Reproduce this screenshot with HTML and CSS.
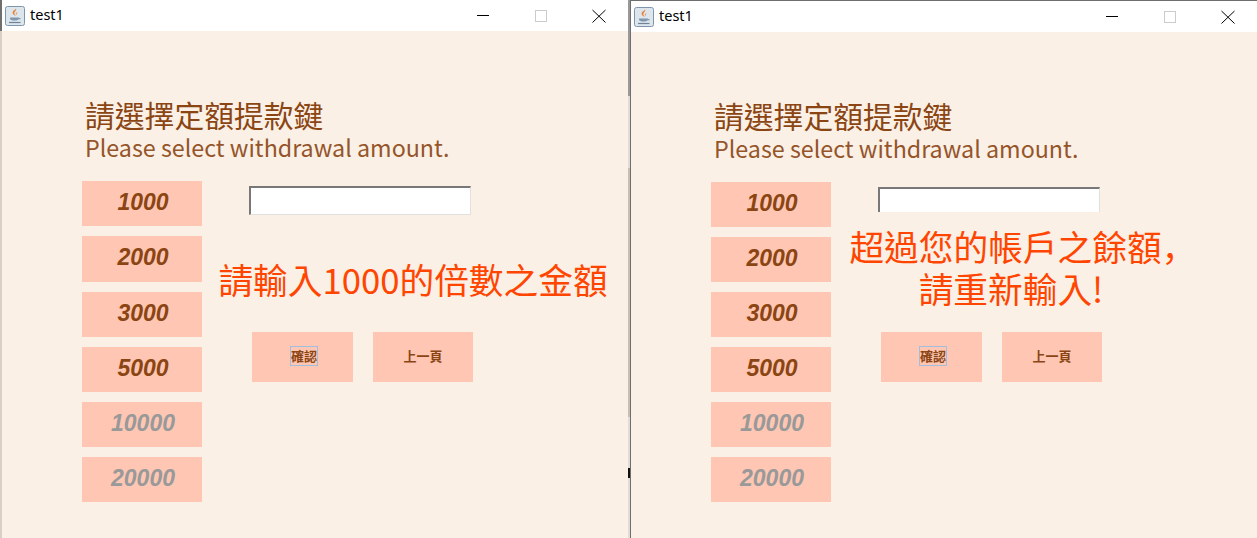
FILE: index.html
```html
<!DOCTYPE html>
<html lang="zh-Hant">
<head>
<meta charset="utf-8">
<title>test1</title>
<link rel="stylesheet" href="styles.css">
</head>
<body>
<main class="desktop">
  <div class="edge"></div>
  <section class="window window-left">
    <header class="titlebar">
      <svg class="app-icon" viewBox="0 0 20 20" aria-hidden="true">
        <rect x="0.5" y="0.5" width="19" height="19" rx="2" fill="#dde5ed" stroke="#7d96ad"/>
        <path d="M11 2.500c1.200 2-2.200 3-1.500 5.500.2.800.8 1.300 1.500 1.800-2.600-.4-4-2.200-3.300-4C8.300 4.300 10.300 4 11 2.500zM12.300 6c.3 1.200-1.300 1.800-.9 3.300-1.100-1.200-.6-2.500.9-3.300z" fill="#e8853a"/>
        <path d="M5 11.500h9v1c0 1.400-2 2-4.500 2S5 13.900 5 12.500zM14 12h1.500v1.300H14z" fill="#8297ab"/>
        <path d="M4 16.500h11.500" stroke="#6f8296" stroke-width="1.200"/>
      </svg>
      <span class="title">test1</span>
      <div class="controls">
        <svg class="ctl" viewBox="0 0 46 30" aria-hidden="true"><path d="M17 14.500h12" stroke="#000"/></svg>
        <svg class="ctl" viewBox="0 0 46 30" aria-hidden="true"><rect x="17.500" y="9.500" width="11" height="11" fill="none" stroke="#ccc"/></svg>
        <svg class="ctl" viewBox="0 0 46 30" aria-hidden="true"><path d="M16.500 9l13 12.500M29.500 9l-13 12.500" stroke="#000" fill="none"/></svg>
      </div>
    </header>
    <div class="content">
      <h1 class="heading">請選擇定額提款鍵</h1>
      <p class="subheading">Please select withdrawal amount.</p>
      <div class="panel">
        <div class="amounts">
          <button class="amount">1000</button>
          <button class="amount">2000</button>
          <button class="amount">3000</button>
          <button class="amount">5000</button>
          <button class="amount off">10000</button>
          <button class="amount off">20000</button>
        </div>
        <div class="form">
          <div class="field tall"></div>
          <p class="message single">請輸入1000的倍數之金額</p>
          <div class="actions">
            <button class="action"><span class="focus">確認</span></button>
            <button class="action">上一頁</button>
          </div>
        </div>
      </div>
    </div>
  </section>
  <div class="gap"><span class="gap-mark"></span></div>
  <section class="window window-right">
    <header class="titlebar">
      <svg class="app-icon" viewBox="0 0 20 20" aria-hidden="true">
        <rect x="0.5" y="0.5" width="19" height="19" rx="2" fill="#dde5ed" stroke="#7d96ad"/>
        <path d="M11 2.500c1.200 2-2.200 3-1.500 5.500.2.800.8 1.300 1.500 1.800-2.600-.4-4-2.200-3.300-4C8.300 4.300 10.300 4 11 2.500zM12.300 6c.3 1.200-1.300 1.800-.9 3.300-1.100-1.200-.6-2.500.9-3.300z" fill="#e8853a"/>
        <path d="M5 11.500h9v1c0 1.400-2 2-4.500 2S5 13.900 5 12.500zM14 12h1.500v1.300H14z" fill="#8297ab"/>
        <path d="M4 16.500h11.500" stroke="#6f8296" stroke-width="1.200"/>
      </svg>
      <span class="title">test1</span>
      <div class="controls">
        <svg class="ctl" viewBox="0 0 46 30" aria-hidden="true"><path d="M17 14.500h12" stroke="#000"/></svg>
        <svg class="ctl" viewBox="0 0 46 30" aria-hidden="true"><rect x="17.500" y="9.500" width="11" height="11" fill="none" stroke="#ccc"/></svg>
        <svg class="ctl" viewBox="0 0 46 30" aria-hidden="true"><path d="M16.500 9l13 12.500M29.500 9l-13 12.500" stroke="#000" fill="none"/></svg>
      </div>
    </header>
    <div class="content">
      <h1 class="heading">請選擇定額提款鍵</h1>
      <p class="subheading">Please select withdrawal amount.</p>
      <div class="panel">
        <div class="amounts">
          <button class="amount">1000</button>
          <button class="amount">2000</button>
          <button class="amount">3000</button>
          <button class="amount">5000</button>
          <button class="amount off">10000</button>
          <button class="amount off">20000</button>
        </div>
        <div class="form">
          <div class="field short"></div>
          <p class="message double">超過您的帳戶之餘額<span class="comma">，</span><br>請重新輸入!</p>
          <div class="actions">
            <button class="action"><span class="focus">確認</span></button>
            <button class="action">上一頁</button>
          </div>
        </div>
      </div>
    </div>
  </section>
</main>
</body>
</html>
```

FILE: styles.css
```css
* { box-sizing: border-box; }
html, body { margin: 0; height: 100%; overflow: hidden; }
body { background: #faf0e6; font-family: "Noto Sans CJK TC", "Noto Sans", sans-serif; }

.desktop { display: flex; height: 538px; overflow: hidden; }
.edge { width: 2px; flex: none; background: linear-gradient(to bottom, #6f6f6f 0 31px, #d8cfc6 31px); }
.window { width: 626px; height: 538px; flex: none; background: #faf0e6; }
.window-right { border-top: 1px solid #6e6e6e; }

.gap { width: 3px; flex: none; position: relative; border-right: 1px solid #6e6e6e; background: linear-gradient(to bottom, #999 0 96px, #e2dcd6 96px 168px, #c9beb3 168px 417px, #e2dcd6 417px); }
.gap-mark { position: absolute; left: 0; top: 468px; width: 2px; height: 10px; background: #111; }

.titlebar { height: 31px; background: #fff; display: flex; align-items: center; padding-left: 3px; }
.app-icon { width: 20px; height: 20px; flex: none; }
.title { font-family: "Noto Sans", sans-serif; font-size: 14.5px; margin-left: 5px; padding-bottom: 3px; color: #000; }
.controls { margin-left: auto; display: flex; }
.ctl { width: 58px; height: 30px; display: block; }

.content { padding-left: 80px; }
.heading { margin: 0; padding: 63px 0 0 3px; font-size: 29.8px; line-height: 41px; font-weight: 400; color: #8b4513; }
.subheading { margin: 0; padding-left: 3px; font-size: 23.27px; line-height: 24px; color: #8b4513; opacity: .9; }

.panel { display: flex; margin-top: 22px; }
.amounts { width: 120px; flex: none; display: flex; flex-direction: column; gap: 10px; }
.amount { height: 45px; flex: none; border: 0; padding: 0 0 3px 2px; background: #ffc7b3; color: #8b4513; font: italic 700 23px "Liberation Sans", sans-serif; }
.window-left .amount:nth-child(2) { height: 46px; }
.amount.off { color: #999; }

.form { margin-left: 47px; width: 400px; padding-top: 5px; }
.field { width: 222px; background: #fff; border: 1px solid #e0e0e0; border-top: 2px solid #787878; border-left: 2px solid #787878; }
.field.tall { height: 29px; }
.field.short { height: 25px; border-bottom: 0; }
.message { margin: 0; color: #ff4500; font-size: 34.7px; text-align: center; background: #faf0e6; white-space: nowrap; }
.message.single { width: 400px; height: 117px; line-height: 46px; padding-top: 41px; margin-left: -36px; }
.message.double { width: 360px; height: 120px; line-height: 42px; padding-top: 13px; margin-left: -47px; }
.comma { display: inline-block; width: 11px; font-family: "Noto Sans CJK JP", sans-serif; }

.actions { display: flex; gap: 20px; margin-left: 3px; }
.action { width: 100px; height: 50px; border: 0; padding: 0 0 4px; background: #ffc7b3; color: #8b4513; font: 700 13px "Noto Sans CJK TC", sans-serif; }
.action:first-child { width: 101px; padding-left: 3px; }
.focus { display: inline-block; outline: 1px solid #a0bfdc; line-height: 18px; }
```
